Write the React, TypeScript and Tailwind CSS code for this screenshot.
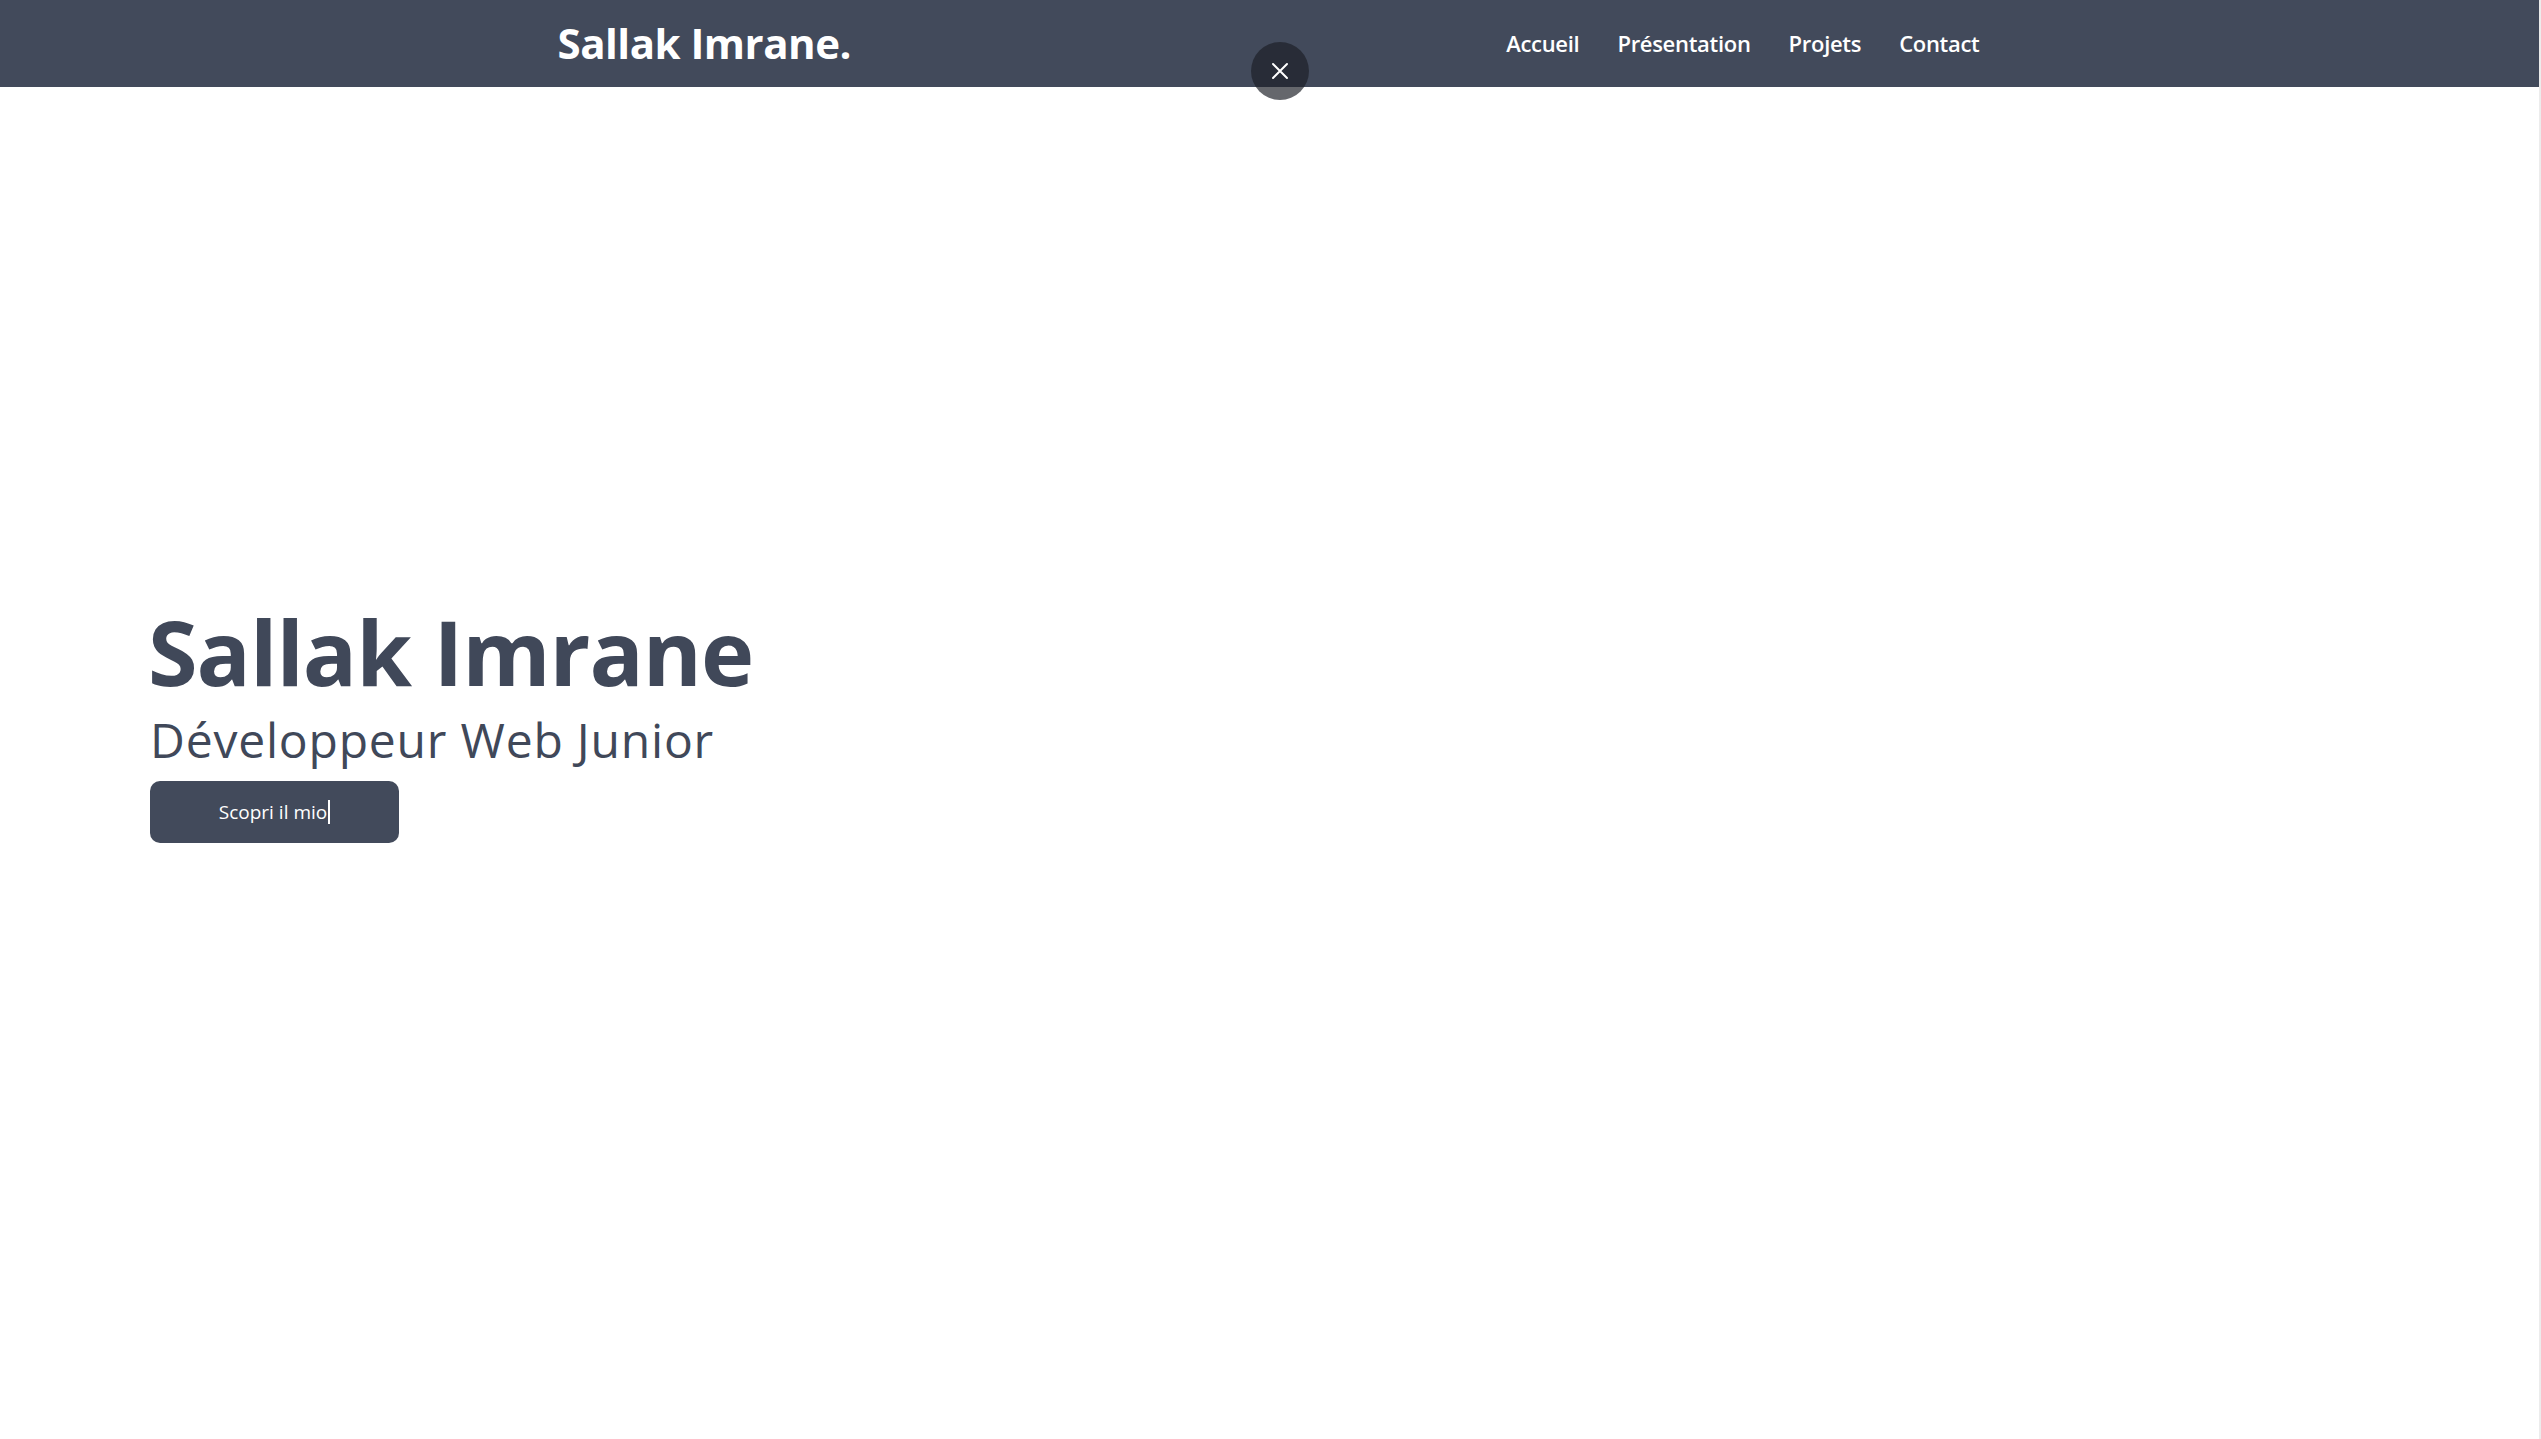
import React from 'react';

const NAV_LINKS = ['Accueil', 'Présentation', 'Projets', 'Contact'];

export default function App() {
  return (
    <div className="relative min-h-screen w-full bg-white border-r-2 border-[#ececec] font-['Open_Sans',sans-serif]">
      <header className="fixed top-0 left-0 right-[2px] h-[87px] bg-[#424a5b] z-10">
        <div className="w-[1424px] h-full mx-auto flex items-center justify-between">
          <a href="#" className="text-white font-bold text-[42px] tracking-[-0.5px] leading-none pb-[2px]">
            Sallak Imrane.
          </a>
          <nav className="flex items-center gap-[38px] pr-[2px]">
            {NAV_LINKS.map((link) => (
              <a key={link} href="#" className="text-white font-semibold text-[22px] tracking-[-0.3px] leading-none pb-[2px]">
                {link}
              </a>
            ))}
          </nav>
        </div>
      </header>

      <button className="fixed top-[42px] left-[1251px] w-[58px] h-[58px] rounded-full bg-[rgba(28,31,38,0.68)] flex items-center justify-center z-20">
        <svg width="18" height="18" viewBox="0 0 18 18" fill="none" stroke="white" strokeWidth="2" strokeLinecap="round">
          <path d="M2 2 L16 16 M16 2 L2 16" />
        </svg>
      </button>

      <main className="min-h-screen flex flex-col justify-center pl-[150px]">
        <h1 className="text-[#404859] font-bold text-[90px] leading-[100px] tracking-[-1px] -ml-[2px] pt-[5px]">
          Sallak Imrane
        </h1>
        <h2 className="text-[#404859] font-normal text-[48px] leading-[56px] tracking-[0.8px] mt-[11px]">
          Développeur Web Junior
        </h2>
        <button className="mt-[13px] w-[249px] h-[62px] rounded-[10px] bg-[#424a5b] text-white text-[19px] flex items-center justify-center">
          <span>Scopri il mio</span>
          <span className="ml-[1px] w-[2px] h-[24px] bg-white" />
        </button>
      </main>
    </div>
  );
}
